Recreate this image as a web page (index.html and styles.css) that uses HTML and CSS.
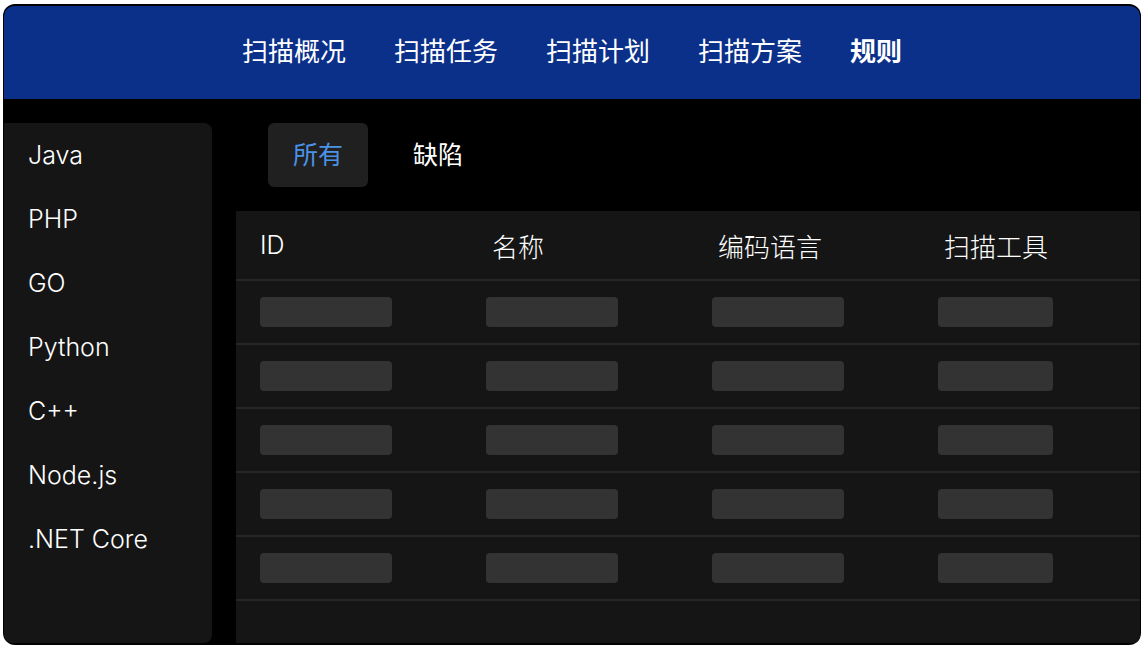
FILE: index.html
```html
<!DOCTYPE html>
<html lang="zh-CN">
<head>
    <meta charset="UTF-8">
    <meta name="viewport" content="width=device-width, initial-scale=1.0">
    <title>规则</title>
    <link rel="stylesheet" href="styles.css">
</head>
<body>
    <div class="app">
        <nav class="topNav">
            <a class="navItem">扫描概况</a>
            <a class="navItem">扫描任务</a>
            <a class="navItem">扫描计划</a>
            <a class="navItem">扫描方案</a>
            <a class="navItem active">规则</a>
        </nav>

        <div class="content">
            <ul class="langList">
                <li>Java</li>
                <li>PHP</li>
                <li>GO</li>
                <li>Python</li>
                <li>C++</li>
                <li>Node.js</li>
                <li>.NET Core</li>
            </ul>

            <div class="main">
                <div class="tabs">
                    <div class="tab active">所有</div>
                    <div class="tab">缺陷</div>
                </div>

                <div class="ruleTable">
                    <div class="row head">
                        <div class="cell">ID</div>
                        <div class="cell">名称</div>
                        <div class="cell">编码语言</div>
                        <div class="cell">扫描工具</div>
                    </div>
                    <div class="row">
                        <div class="cell"><span class="skeleton"></span></div>
                        <div class="cell"><span class="skeleton"></span></div>
                        <div class="cell"><span class="skeleton"></span></div>
                        <div class="cell"><span class="skeleton short"></span></div>
                    </div>
                    <div class="row">
                        <div class="cell"><span class="skeleton"></span></div>
                        <div class="cell"><span class="skeleton"></span></div>
                        <div class="cell"><span class="skeleton"></span></div>
                        <div class="cell"><span class="skeleton short"></span></div>
                    </div>
                    <div class="row">
                        <div class="cell"><span class="skeleton"></span></div>
                        <div class="cell"><span class="skeleton"></span></div>
                        <div class="cell"><span class="skeleton"></span></div>
                        <div class="cell"><span class="skeleton short"></span></div>
                    </div>
                    <div class="row">
                        <div class="cell"><span class="skeleton"></span></div>
                        <div class="cell"><span class="skeleton"></span></div>
                        <div class="cell"><span class="skeleton"></span></div>
                        <div class="cell"><span class="skeleton short"></span></div>
                    </div>
                    <div class="row">
                        <div class="cell"><span class="skeleton"></span></div>
                        <div class="cell"><span class="skeleton"></span></div>
                        <div class="cell"><span class="skeleton"></span></div>
                        <div class="cell"><span class="skeleton short"></span></div>
                    </div>
                </div>
            </div>
        </div>
    </div>
</body>
</html>
```

FILE: styles.css
```css
body {
    margin: 0;
    background-color: #fff;
    font-family: Inter, "Noto Sans CJK SC", sans-serif;
    color: #fff;
}
.app {
    box-sizing: border-box;
    width: 1138px;
    height: 641px;
    margin: 4px 0 0 3px;
    padding: 2px 1px;
    background-color: #000;
    border-radius: 12px;
    overflow: hidden;
    display: flex;
    flex-direction: column;
}
.topNav {
    height: 93px;
    flex-shrink: 0;
    background-color: #0b308a;
    border-radius: 10px 10px 0 0;
    display: flex;
    justify-content: center;
    align-items: center;
    gap: 48px;
    padding-bottom: 7px;
    box-sizing: border-box;
}
.navItem {
    font-size: 26px;
    color: #fff;
    cursor: pointer;
}
.navItem.active {
    font-weight: bold;
}
.content {
    flex: 1;
    display: flex;
    min-height: 0;
}
.langList {
    list-style: none;
    margin: 24px 0 0;
    padding: 0;
    width: 208px;
    background-color: #151515;
    border-radius: 0 8px 8px 8px;
}
.langList li {
    height: 64px;
    line-height: 64px;
    padding-left: 24px;
    font-size: 25px;
    font-weight: 300;
}
.main {
    flex: 1;
    margin-left: 24px;
    padding-top: 24px;
    display: flex;
    flex-direction: column;
}
.tabs {
    display: flex;
    gap: 20px;
    padding-left: 32px;
    margin-bottom: 24px;
}
.tab {
    width: 100px;
    height: 64px;
    line-height: 64px;
    text-align: center;
    font-size: 25px;
    border-radius: 6px;
    cursor: pointer;
}
.tab.active {
    background-color: #202020;
    color: #4b92e6;
}
.ruleTable {
    flex: 1;
    background-color: #151515;
}
.row {
    display: grid;
    grid-template-columns: repeat(4, 226px);
    height: 62px;
    align-items: center;
    border-bottom: 2px solid #262626;
}
.row.head {
    height: 68px;
}
.cell {
    padding-left: 24px;
    font-size: 25px;
    font-weight: 300;
}
.row.head .cell + .cell {
    padding-left: 30px;
    font-size: 26px;
}
.skeleton {
    display: block;
    width: 132px;
    height: 30px;
    border-radius: 4px;
    background-color: #333;
}
.skeleton.short {
    width: 115px;
}
```
